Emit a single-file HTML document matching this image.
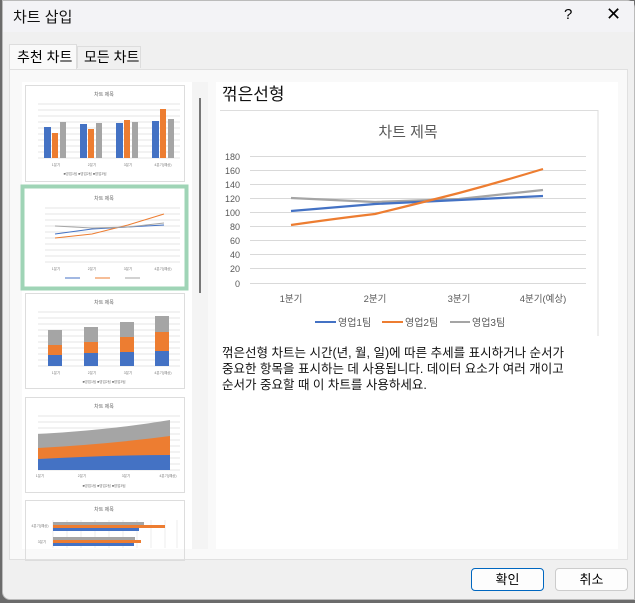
<!DOCTYPE html>
<html><head><meta charset="utf-8"><style>
*{margin:0;padding:0;box-sizing:border-box}
body{width:635px;height:603px;overflow:hidden;background:#6b6b6b;font-family:"Liberation Sans","Noto Sans CJK KR",sans-serif;position:relative}
.dlg{position:absolute;left:2px;top:0;width:633px;height:600px;background:#f0f0f0;border:1px solid #bbb;border-radius:0 8px 0 8px}
.tb{position:absolute;left:0;top:0;width:100%;height:31px;background:#f3f3f6}
.abs{position:absolute}
.btn{position:absolute;top:567px;height:23px;border:1px solid #ccc;border-radius:4px;background:#fdfdfd;font-size:13px;text-align:center;line-height:21px}
</style></head><body>
<div class="dlg">
<div class="tb"></div>
<div class="abs" style="left:10px;top:5px;font-size:15px;color:#111">차트 삽입</div>
<div class="abs" style="left:561px;top:5px;font-size:15px">?</div>
<div class="abs" style="left:603px;top:3px;font-size:18px;font-weight:300">✕</div>
<div class="abs" style="left:6px;top:43px;width:68px;height:26px;background:#f9f9f9;border:1px solid #ddd;border-bottom:none;font-size:14px;padding:2px 0 0 7px">추천 차트</div>
<div class="abs" style="left:74px;top:45px;width:64px;height:22px;background:#f0f0f0;border:1px solid #ddd;border-bottom:none;font-size:14px;padding:0 0 0 6px">모든 차트</div>
<div class="abs" style="left:6px;top:68px;width:619px;height:491px;background:#f9f9f9;border:1px solid #e0e0e0"></div>
<div class="abs" style="left:19px;top:81px;width:170px;height:467px;background:#fff"></div>
<div class="abs" style="left:189px;top:81px;width:16px;height:467px;background:#f4f4f4"></div>
<div class="abs" style="left:196px;top:97px;width:2px;height:195px;background:#777"></div>
<div class="abs" style="left:213px;top:81px;width:402px;height:467px;background:#fff"></div>
<div class="btn" style="left:468px;width:73px;border:1px solid #0067c0">확인</div>
<div class="btn" style="left:552px;width:73px">취소</div>
</div>
<svg class="abs" style="left:0;top:0" width="635" height="603" font-family="Liberation Sans, Noto Sans CJK KR, sans-serif">
<g fill="none" stroke="#ddd"><rect x="25.5" y="85.5" width="159" height="96"/><rect x="25.5" y="293.5" width="159" height="95"/><rect x="25.5" y="397.5" width="159" height="95"/><rect x="25.5" y="500.5" width="159" height="60"/></g>
<rect x="22.5" y="186.5" width="164" height="102" fill="none" stroke="#9fd4b6" stroke-width="4"/>
<g font-size="5" fill="#666" text-anchor="middle"><text x="104" y="96">차트 제목</text><text x="104" y="200">차트 제목</text><text x="104" y="304">차트 제목</text><text x="104" y="408">차트 제목</text><text x="104" y="511">차트 제목</text></g>
<g stroke="#dcdcdc" stroke-width="0.8">
<path d="M38 104H180M38 110H180M38 116H180M38 122H180M38 128H180M38 134H180M38 140H180M38 146H180M38 152H180M38 158H180"/>
<path d="M45 208H180M45 214H180M45 220H180M45 226H180M45 232H180M45 238H180M45 244H180M45 250H180M45 256H180M45 262H180"/>
<path d="M38 312H180M38 318H180M38 324H180M38 330H180M38 336H180M38 342H180M38 348H180M38 354H180M38 360H180M38 366H180"/>
<path d="M38 416H180M38 422H180M38 428H180M38 434H180M38 440H180M38 446H180M38 452H180M38 458H180M38 464H180M38 470H180"/>
</g>
<g fill="#4472c4"><rect x="44" y="127" width="7" height="31"/><rect x="80" y="124" width="7" height="34"/><rect x="116" y="123" width="7" height="35"/><rect x="152" y="121" width="7" height="37"/></g>
<g fill="#ed7d31"><rect x="52" y="133" width="6" height="25"/><rect x="88" y="129" width="6" height="29"/><rect x="124" y="120" width="6" height="38"/><rect x="160" y="109" width="6" height="49"/></g>
<g fill="#a5a5a5"><rect x="60" y="122" width="6" height="36"/><rect x="96" y="123" width="6" height="35"/><rect x="132" y="122" width="6" height="36"/><rect x="168" y="119" width="6" height="39"/></g>
<g fill="none" stroke-width="1"><polyline stroke="#4472c4" points="55,234 92,229 128,227 164,225"/><polyline stroke="#ed7d31" points="55,238 92,234 128,225 164,214"/><polyline stroke="#a5a5a5" points="55,226 92,228 128,227 164,223"/></g>
<g fill="#4472c4"><rect x="48" y="355" width="14" height="11"/><rect x="84" y="353" width="14" height="13"/><rect x="120" y="352" width="14" height="14"/><rect x="155" y="351" width="14" height="15"/></g>
<g fill="#ed7d31"><rect x="48" y="345" width="14" height="10"/><rect x="84" y="342" width="14" height="11"/><rect x="120" y="337" width="14" height="15"/><rect x="155" y="332" width="14" height="19"/></g>
<g fill="#a5a5a5"><rect x="48" y="330" width="14" height="15"/><rect x="84" y="327" width="14" height="15"/><rect x="120" y="322" width="14" height="15"/><rect x="155" y="316" width="14" height="16"/></g>
<path d="M38 434Q110 430 170 420V455Q110 458 38 459Z" fill="#a5a5a5"/>
<path d="M38 448Q110 444 170 436V455Q110 458 38 459Z" fill="#ed7d31"/>
<path d="M38 459Q110 455 170 455V470H38Z" fill="#4472c4"/>
<g stroke="#e3e3e3" stroke-width="0.6"><path d="M53 520V548M67 520V548M81 520V548M95 520V548M109 520V548M123 520V548M137 520V548M151 520V548M165 520V548M177 520V548"/></g>
<rect x="53" y="522" width="91" height="3" fill="#a5a5a5"/><rect x="53" y="525" width="112" height="3" fill="#ed7d31"/><rect x="53" y="528" width="86" height="3" fill="#4472c4"/>
<rect x="53" y="537" width="82" height="3" fill="#a5a5a5"/><rect x="53" y="540" width="88" height="3" fill="#ed7d31"/><rect x="53" y="543" width="81" height="3" fill="#4472c4"/>
<g font-size="3.5" fill="#777" text-anchor="middle"><text x="56" y="166">1분기</text><text x="92" y="166">2분기</text><text x="128" y="166">3분기</text><text x="163" y="166">4분기(예상)</text>
<text x="56" y="270">1분기</text><text x="92" y="270">2분기</text><text x="128" y="270">3분기</text><text x="163" y="270">4분기(예상)</text>
<text x="56" y="374">1분기</text><text x="92" y="374">2분기</text><text x="128" y="374">3분기</text><text x="163" y="374">4분기(예상)</text>
<text x="40" y="477">1분기</text><text x="82" y="477">2분기</text><text x="126" y="477">3분기</text><text x="168" y="477">4분기(예상)</text>
<text x="85" y="175">■영업1팀 ■영업2팀 ■영업3팀</text><text x="104" y="383">■영업1팀 ■영업2팀 ■영업3팀</text><text x="104" y="487">■영업1팀 ■영업2팀 ■영업3팀</text>
<text x="40" y="527">4분기(예상)</text><text x="42" y="543">3분기</text></g>
<g stroke-width="1"><path d="M65 278H80" stroke="#4472c4"/><path d="M95 278H110" stroke="#ed7d31"/><path d="M125 278H140" stroke="#a5a5a5"/></g>
<text x="222" y="100" font-size="17" fill="#111">꺾은선형</text>
<path d="M220 110.5H598V336" stroke="#ddd" fill="none"/>
<text x="408" y="137" font-size="15" fill="#595959" text-anchor="middle">차트 제목</text>
<g stroke="#d9d9d9"><path d="M250 156.5H586M250 170.5H586M250 184.5H586M250 198.5H586M250 212.5H586M250 226.5H586M250 240.5H586M250 254.5H586M250 268.5H586M250 283.5H586"/></g>
<g font-size="9" fill="#595959" text-anchor="end"><text x="240" y="160">180</text><text x="240" y="174">160</text><text x="240" y="188">140</text><text x="240" y="202">120</text><text x="240" y="216">100</text><text x="240" y="230">80</text><text x="240" y="244">60</text><text x="240" y="258">40</text><text x="240" y="272">20</text><text x="240" y="287">0</text></g>
<g font-size="9.5" fill="#595959" text-anchor="middle"><text x="291" y="302">1분기</text><text x="375" y="302">2분기</text><text x="459" y="302">3분기</text><text x="543" y="302">4분기(예상)</text></g>
<g fill="none" stroke-width="2.2">
<path d="M291 198L375 202L459 199L543 190" stroke="#a5a5a5"/>
<path d="M291 211L375 204L459 200L543 196" stroke="#4472c4"/>
<path d="M291 225Q340 218 375 214Q420 203 459 193Q500 182 543 169" stroke="#ed7d31"/>
</g>
<g stroke-width="2"><path d="M315 322H336" stroke="#4472c4"/><path d="M382 322H403" stroke="#ed7d31"/><path d="M450 322H470" stroke="#a5a5a5"/></g>
<g font-size="10" fill="#595959"><text x="338" y="326">영업1팀</text><text x="405" y="326">영업2팀</text><text x="472" y="326">영업3팀</text></g>
<g font-size="12.5" fill="#111"><text x="222" y="357">꺾은선형 차트는 시간(년, 월, 일)에 따른 추세를 표시하거나 순서가</text><text x="222" y="373">중요한 항목을 표시하는 데 사용됩니다. 데이터 요소가 여러 개이고</text><text x="222" y="389">순서가 중요할 때 이 차트를 사용하세요.</text></g>
</svg>
</body></html>
